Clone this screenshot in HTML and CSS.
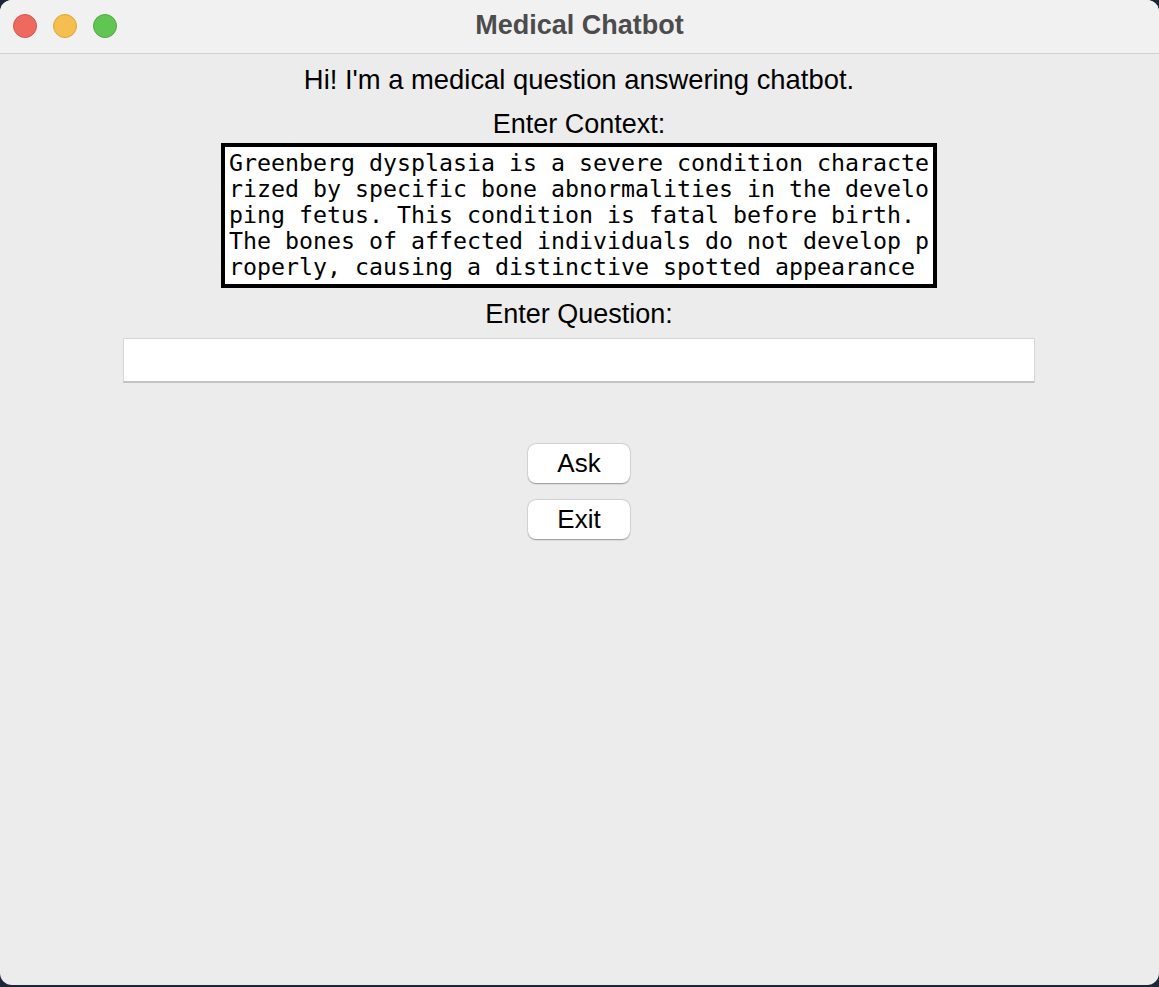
FILE: index.html
```html
<!DOCTYPE html>
<html>
<head>
<meta charset="utf-8">
<title>Medical Chatbot</title>
<link rel="stylesheet" href="styles.css">
</head>
<body>
<div class="window">
  <div class="titlebar">
    <div class="lights">
      <span class="light red"></span>
      <span class="light yellow"></span>
      <span class="light green"></span>
    </div>
    <div class="title">Medical Chatbot</div>
  </div>
  <div class="content">
    <div class="label greet">Hi! I'm a medical question answering chatbot.</div>
    <div class="label ctx-label">Enter Context:</div>
    <div class="context-box">
      <div class="context-text">Greenberg dysplasia is a severe condition characterized by specific bone abnormalities in the developing fetus. This condition is fatal before birth. The bones of affected individuals do not develop properly, causing a distinctive spotted appearance</div>
    </div>
    <div class="label q-label">Enter Question:</div>
    <div class="entry"></div>
    <div class="buttons">
      <button class="btn">Ask</button>
      <button class="btn">Exit</button>
    </div>
  </div>
</div>
</body>
</html>
```

FILE: styles.css
```css
* { box-sizing: border-box; }
html, body {
  margin: 0;
  padding: 0;
  width: 1159px;
  height: 987px;
  overflow: hidden;
  background: #1d2637;
}
.window {
  width: 1159px;
  height: 985px;
  background: #ececec;
  border-radius: 12px;
  overflow: hidden;
  display: flex;
  flex-direction: column;
  font-family: "Liberation Sans", Arial, sans-serif;
  color: #000;
}
.titlebar {
  height: 54px;
  flex: none;
  background: #f1f1f1;
  border-bottom: 1px solid #d0d0d0;
  position: relative;
  display: flex;
  align-items: center;
  justify-content: center;
}
.lights {
  position: absolute;
  left: 13px;
  top: 14px;
  display: flex;
  gap: 16px;
}
.light {
  width: 24px;
  height: 24px;
  border-radius: 50%;
  display: block;
}
.red { background: #ee6a5e; border: 1px solid #d5564b; }
.yellow { background: #f5bf4f; border: 1px solid #d9a43f; }
.green { background: #61c554; border: 1px solid #4ea940; }
.title {
  font-weight: bold;
  font-size: 27px;
  line-height: 32px;
  color: #4c4c4c;
  padding-bottom: 3px;
}
.content {
  display: flex;
  flex-direction: column;
  align-items: center;
  padding-top: 10px;
  padding-right: 1px;
}
.label {
  font-size: 27px;
  line-height: 32px;
}
.greet { font-size: 27.4px; }
.ctx-label { margin-top: 12px; }
.context-box {
  margin-top: 3px;
  width: 716px;
  height: 145px;
  border: 4px solid #000;
  background: #fff;
  padding: 3px 4px 0 4px;
  overflow: hidden;
}
.context-text {
  width: 703px;
  font-family: "DejaVu Sans Mono", "Liberation Mono", monospace;
  font-size: 23.25px;
  line-height: 26px;
  white-space: pre-wrap;
  word-break: break-all;
}
.q-label { margin-top: 10px; }
.entry {
  margin-top: 8px;
  width: 912px;
  height: 45px;
  background: #fff;
  border-top: 1px solid #d6d6d6;
  border-left: 1px solid #d6d6d6;
  border-right: 1px solid #d6d6d6;
  border-bottom: 2px solid #c3c3c3;
}
.buttons {
  margin-top: 61px;
  display: flex;
  flex-direction: column;
  gap: 17px;
}
.btn {
  width: 102px;
  height: 39px;
  background: #fff;
  border: none;
  border-radius: 8px;
  box-shadow: 0 0.5px 1.5px rgba(0,0,0,0.35), 0 0 0 0.5px rgba(0,0,0,0.08);
  font-family: "Liberation Sans", Arial, sans-serif;
  font-size: 26px;
  color: #000;
  padding: 0;
  line-height: 39px;
}
```
